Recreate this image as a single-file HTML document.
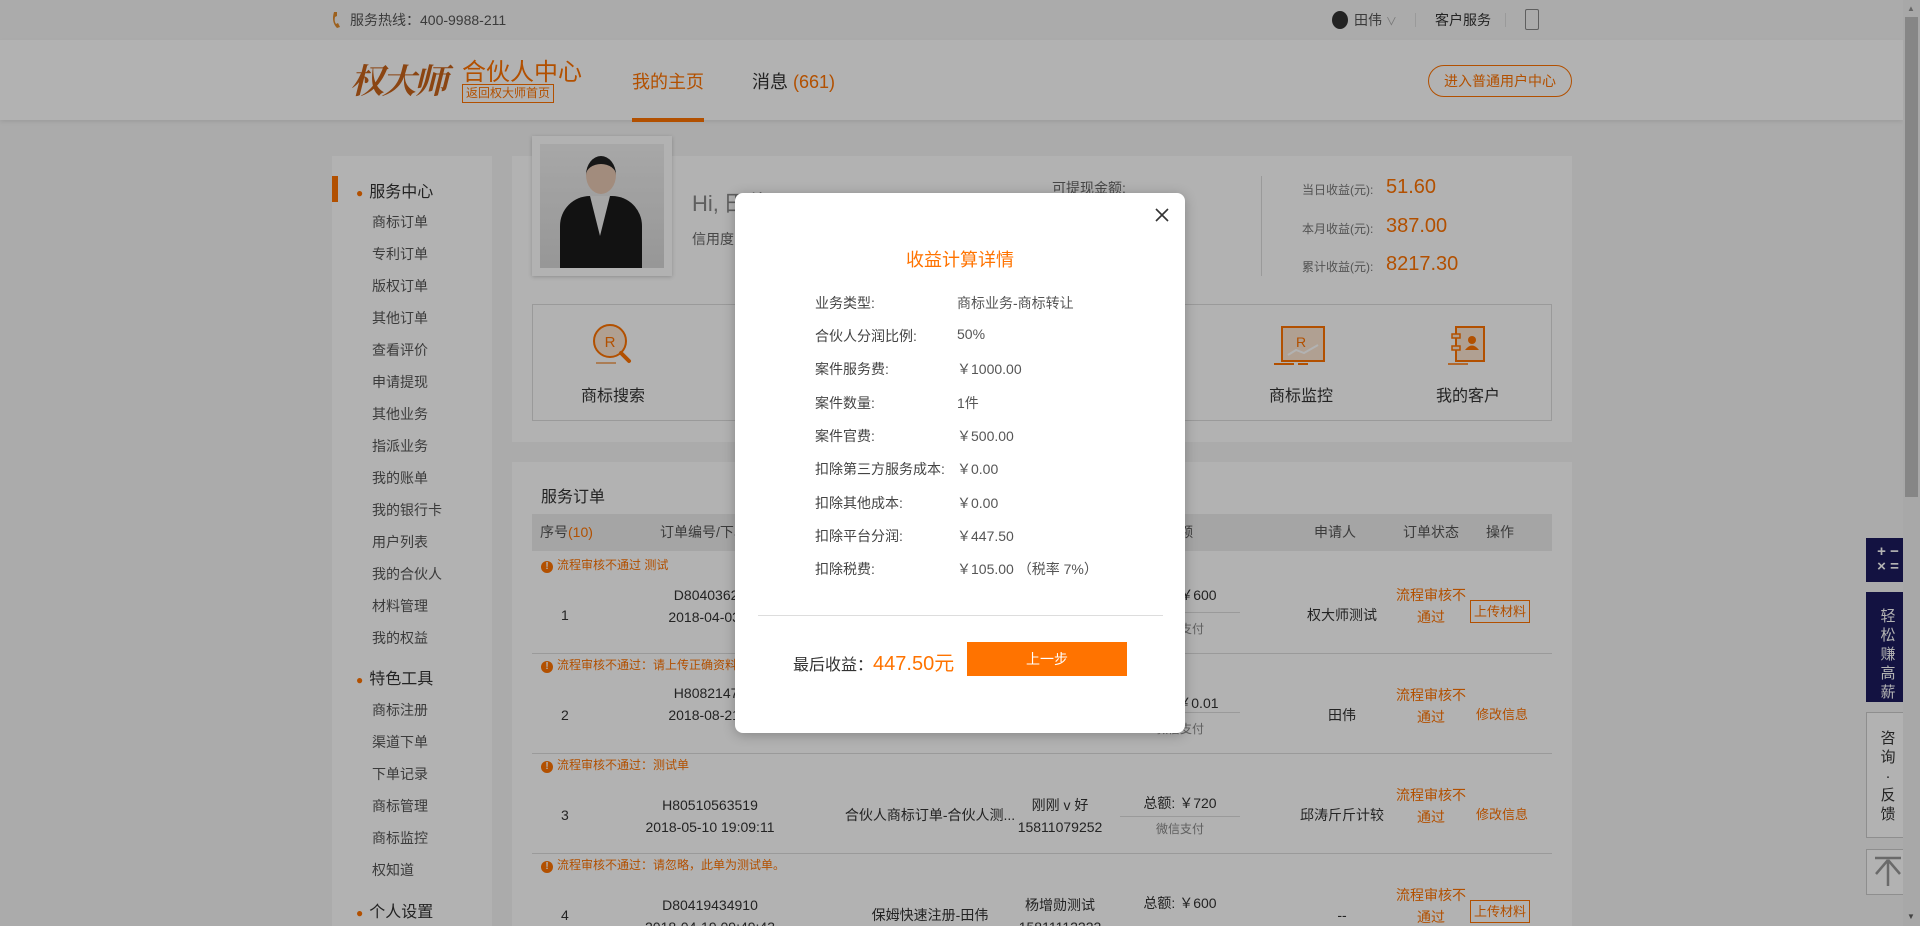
<!DOCTYPE html>
<html><head><meta charset="utf-8"><style>
*{margin:0;padding:0;box-sizing:border-box}
html,body{width:1920px;height:926px;overflow:hidden}
body{position:relative;background:#f5f5f5;font-family:"Liberation Sans","Noto Sans CJK SC",sans-serif;color:#333;font-size:14px}
.a{position:absolute;white-space:nowrap}
.or{color:#ff7300}
.top{left:0;top:0;width:1903px;height:40px;background:#f5f5f5}
.hdr{left:0;top:40px;width:1903px;height:80px;background:#fff;box-shadow:0 2px 4px rgba(0,0,0,.08)}
.card{background:#fff}
.si{position:absolute;left:372px;font-size:14px;color:#555}
.th{position:absolute;top:514px;height:37px;line-height:37px;font-size:14px;color:#555}
.notice{position:absolute;left:541px;font-size:12px;color:#ff7300}
.notice i{display:inline-block;width:12px;height:12px;border-radius:50%;background:#ff7300;color:#fff;font-style:normal;font-size:10px;text-align:center;line-height:12px;margin-right:4px;font-weight:bold}
.c{position:absolute;text-align:center;font-size:14px;line-height:22px;color:#333;white-space:nowrap}
.c.or{color:#ff7300}
.ov{position:absolute;left:0;top:0;width:1920px;height:926px;background:rgba(0,0,0,.3)}
.ml{position:absolute;left:80px;font-size:14px;color:#444}
.mv{position:absolute;left:222px;font-size:14px;color:#555}
</style></head><body>
<div class="a top"></div>
<svg class="a" style="left:330px;top:11px" width="12" height="18" viewBox="0 0 12 18"><path d="M4 1 L7 1 L7 5 L5 6 Q4 10 6 13 L8 12 L10 16 L7 17 Q1 11 4 1Z" fill="#e08a2a"/></svg>
<div class="a" style="left:350px;top:10px;font-size:14px;color:#555">服务热线：400-9988-211</div>
<div class="a" style="left:1332px;top:11px;width:16px;height:18px;border-radius:50%;background:#333"></div>
<div class="a" style="left:1354px;top:10px;font-size:14px;color:#555">田伟 <span style="color:#aaa;font-size:11px">∨</span></div>
<div class="a" style="left:1415px;top:13px;width:1px;height:14px;background:#ddd"></div>
<div class="a" style="left:1435px;top:10px;font-size:14px;color:#333">客户服务</div>
<div class="a" style="left:1505px;top:13px;width:1px;height:14px;background:#ddd"></div>
<div class="a" style="left:1525px;top:9px;width:14px;height:21px;border:1.5px solid #888;border-radius:2px"></div>
<div class="a hdr"></div>
<div class="a" style="left:350px;top:54px;font-family:'Noto Serif CJK SC',serif;font-size:34px;color:#c8631a;font-style:italic;font-weight:bold;letter-spacing:-2px">权大师</div>
<div class="a" style="left:462px;top:52px;font-size:24px;color:#ff7300">合伙人中心</div>
<div class="a" style="left:462px;top:84px;border:1px solid #ff7300;color:#ff7300;font-size:12px;padding:0 3px;line-height:17px">返回权大师首页</div>
<div class="a" style="left:632px;top:68px;font-size:18px;color:#ff7300">我的主页</div>
<div class="a" style="left:632px;top:118px;width:72px;height:4px;background:#ff7300"></div>
<div class="a" style="left:752px;top:68px;font-size:18px;color:#333">消息 <span class="or">(661)</span></div>
<div class="a" style="left:1428px;top:65px;width:144px;height:32px;border:1px solid #ff7300;border-radius:16px;color:#ff7300;text-align:center;line-height:30px;font-size:14px">进入普通用户中心</div>

<div class="a card" style="left:332px;top:156px;width:160px;height:770px"></div>
<div class="a" style="left:332px;top:176px;width:6px;height:26px;background:#ff7300"></div>
<div class="a" style="left:356px;top:178px;font-size:16px;color:#333"><span class="or" style="font-size:12px;margin-right:6px">●</span>服务中心</div>
<div class="si" style="top:212px">商标订单</div><div class="si" style="top:244px">专利订单</div><div class="si" style="top:276px">版权订单</div><div class="si" style="top:308px">其他订单</div><div class="si" style="top:340px">查看评价</div><div class="si" style="top:372px">申请提现</div><div class="si" style="top:404px">其他业务</div><div class="si" style="top:436px">指派业务</div><div class="si" style="top:468px">我的账单</div><div class="si" style="top:500px">我的银行卡</div><div class="si" style="top:532px">用户列表</div><div class="si" style="top:564px">我的合伙人</div><div class="si" style="top:596px">材料管理</div><div class="si" style="top:628px">我的权益</div>
<div class="a" style="left:356px;top:665px;font-size:16px;color:#333"><span class="or" style="font-size:12px;margin-right:6px">●</span>特色工具</div>
<div class="si" style="top:700px">商标注册</div><div class="si" style="top:732px">渠道下单</div><div class="si" style="top:764px">下单记录</div><div class="si" style="top:796px">商标管理</div><div class="si" style="top:828px">商标监控</div><div class="si" style="top:860px">权知道</div>
<div class="a" style="left:356px;top:898px;font-size:16px;color:#333"><span class="or" style="font-size:12px;margin-right:6px">●</span>个人设置</div>

<div class="a card" style="left:512px;top:156px;width:1060px;height:286px"></div>
<div class="a" style="left:532px;top:136px;width:140px;height:140px;background:#fff;box-shadow:0 1px 4px rgba(0,0,0,.2)"></div>
<div class="a" style="left:540px;top:144px;width:124px;height:124px;background:linear-gradient(#f0f0f0,#d8d8d8)"></div>
<div class="a" style="left:560px;top:196px;width:82px;height:72px;background:#1a1a1a;border-radius:30px 30px 0 0"></div>
<div class="a" style="left:590px;top:196px;width:20px;height:40px;background:#eee;clip-path:polygon(0 0,100% 0,50% 100%)"></div>
<div class="a" style="left:586px;top:156px;width:30px;height:38px;background:#e9c9b4;border-radius:50%;border-top:8px solid #222"></div>
<div class="a" style="left:692px;top:186px;font-size:22px;color:#888">Hi, 田伟</div>
<div class="a" style="left:692px;top:229px;font-size:14px;color:#666">信用度</div>
<div class="a" style="left:1052px;top:178px;font-size:14px;color:#666">可提现金额:</div>
<div class="a" style="left:1261px;top:176px;width:1px;height:100px;background:#ddd"></div>
<div class="a" style="left:1302px;top:181px;font-size:12px;color:#777">当日收益(元):</div><div class="a or" style="left:1386px;top:176px;font-size:20px">51.60</div>
<div class="a" style="left:1302px;top:220px;font-size:12px;color:#777">本月收益(元):</div><div class="a or" style="left:1386px;top:215px;font-size:20px">387.00</div>
<div class="a" style="left:1302px;top:258px;font-size:12px;color:#777">累计收益(元):</div><div class="a or" style="left:1386px;top:253px;font-size:20px">8217.30</div>
<div class="a" style="left:532px;top:304px;width:1020px;height:117px;border:1px solid #ddd"></div>
<svg class="a" style="left:590px;top:324px" width="48" height="44" viewBox="0 0 48 44"><circle cx="20" cy="17" r="16" fill="#fde6d2" stroke="#ff7300" stroke-width="2"/><text x="20" y="23" font-size="15" text-anchor="middle" fill="#ff7300" font-family="Liberation Sans">R</text><path d="M31 29 L39 37" stroke="#ff7300" stroke-width="4" stroke-linecap="round"/><path d="M6 39 L26 39" stroke="#f5b37a" stroke-width="2"/></svg>
<div class="a" style="left:581px;top:382px;font-size:16px;color:#333">商标搜索</div>
<svg class="a" style="left:1274px;top:325px" width="52" height="44" viewBox="0 0 52 44"><rect x="8" y="2" width="42" height="34" fill="#fde6d2" stroke="#ff7300" stroke-width="2"/><text x="27" y="22" font-size="14" text-anchor="middle" fill="#ff7300" font-family="Liberation Sans">R</text><path d="M14 30 L22 25 L30 28 L44 20" stroke="#fff" stroke-width="2" fill="none"/><path d="M0 39 H20 M24 39 H34" stroke="#ff7300" stroke-width="2"/></svg>
<div class="a" style="left:1269px;top:382px;font-size:16px;color:#333">商标监控</div>
<svg class="a" style="left:1448px;top:325px" width="40" height="44" viewBox="0 0 40 44"><rect x="8" y="2" width="28" height="34" fill="#fde6d2" stroke="#ff7300" stroke-width="2"/><rect x="4" y="9" width="8" height="4" fill="#fde6d2" stroke="#ff7300" stroke-width="1.5"/><rect x="4" y="21" width="8" height="4" fill="#fde6d2" stroke="#ff7300" stroke-width="1.5"/><circle cx="24" cy="15" r="4" fill="#ff7300"/><path d="M17 25 Q24 16 31 25Z" fill="#ff7300"/><path d="M0 39 H20" stroke="#ff7300" stroke-width="1.5"/></svg>
<div class="a" style="left:1436px;top:382px;font-size:16px;color:#333">我的客户</div>

<div class="a card" style="left:512px;top:462px;width:1060px;height:464px"></div>
<div class="a" style="left:541px;top:483px;font-size:16px;color:#333">服务订单</div>
<div class="a" style="left:532px;top:514px;width:1020px;height:37px;background:#ececec"></div>
<div class="th" style="left:540px">序号<span class="or">(10)</span></div>
<div class="th" style="left:660px">订单编号/下单时间</div>
<div class="th" style="left:900px">产品名称</div>
<div class="th" style="left:1040px">申请信息</div>
<div class="th" style="left:1165px">总额</div>
<div class="th" style="left:1314px">申请人</div>
<div class="th" style="left:1403px">订单状态</div>
<div class="th" style="left:1486px">操作</div>

<div class="notice" style="top:556px"><i>!</i>流程审核不通过 测试</div>
<div class="c" style="left:561px;top:604px">1</div>
<div class="c" style="left:620px;top:584px;width:180px">D80403625<br>2018-04-03 0</div>
<div class="c" style="left:1120px;top:584px;width:120px">总额: ￥600</div>
<div class="a" style="left:1120px;top:612px;width:120px;height:1px;background:#ddd"></div>
<div class="c" style="left:1120px;top:618px;width:120px;font-size:12px;color:#888">微信支付</div>
<div class="c" style="left:1272px;top:604px;width:140px">权大师测试</div>
<div class="c or" style="left:1391px;top:584px;width:80px">流程审核不<br>通过</div>
<div class="a" style="left:1470px;top:600px;border:1px solid #ff7300;color:#ff7300;font-size:13px;padding:0 3px;line-height:21px">上传材料</div>
<div class="a" style="left:532px;top:653px;width:1020px;height:1px;background:#ddd"></div>

<div class="notice" style="top:656px"><i>!</i>流程审核不通过：请上传正确资料</div>
<div class="c" style="left:561px;top:704px">2</div>
<div class="c" style="left:620px;top:682px;width:180px">H80821474<br>2018-08-21 2</div>
<div class="c" style="left:1120px;top:692px;width:120px">总额: ￥0.01</div>
<div class="a" style="left:1120px;top:712px;width:120px;height:1px;background:#ddd"></div>
<div class="c" style="left:1120px;top:718px;width:120px;font-size:12px;color:#888">微信支付</div>
<div class="c" style="left:1272px;top:704px;width:140px">田伟</div>
<div class="c or" style="left:1391px;top:684px;width:80px">流程审核不<br>通过</div>
<div class="c or" style="left:1476px;top:704px;font-size:13px">修改信息</div>
<div class="a" style="left:532px;top:753px;width:1020px;height:1px;background:#ddd"></div>

<div class="notice" style="top:756px"><i>!</i>流程审核不通过：测试单</div>
<div class="c" style="left:561px;top:804px">3</div>
<div class="c" style="left:620px;top:794px;width:180px">H80510563519<br>2018-05-10 19:09:11</div>
<div class="c" style="left:830px;top:804px;width:200px">合伙人商标订单-合伙人测...</div>
<div class="c" style="left:1000px;top:794px;width:120px">刚刚 v 好<br>15811079252</div>
<div class="c" style="left:1120px;top:792px;width:120px">总额: ￥720</div>
<div class="a" style="left:1120px;top:816px;width:120px;height:1px;background:#ddd"></div>
<div class="c" style="left:1120px;top:818px;width:120px;font-size:12px;color:#888">微信支付</div>
<div class="c" style="left:1272px;top:804px;width:140px">邱涛斤斤计较</div>
<div class="c or" style="left:1391px;top:784px;width:80px">流程审核不<br>通过</div>
<div class="c or" style="left:1476px;top:804px;font-size:13px">修改信息</div>
<div class="a" style="left:532px;top:853px;width:1020px;height:1px;background:#ddd"></div>

<div class="notice" style="top:856px"><i>!</i>流程审核不通过：请忽略，此单为测试单。</div>
<div class="c" style="left:561px;top:904px">4</div>
<div class="c" style="left:620px;top:894px;width:180px">D80419434910<br>2018-04-19 09:49:43</div>
<div class="c" style="left:830px;top:904px;width:200px">保姆快速注册-田伟</div>
<div class="c" style="left:1000px;top:894px;width:120px">杨增勋测试<br>15811112222</div>
<div class="c" style="left:1120px;top:892px;width:120px">总额: ￥600</div>
<div class="c" style="left:1272px;top:904px;width:140px">--</div>
<div class="c or" style="left:1391px;top:884px;width:80px">流程审核不<br>通过</div>
<div class="a" style="left:1470px;top:900px;border:1px solid #ff7300;color:#ff7300;font-size:13px;padding:0 3px;line-height:21px">上传材料</div>

<div class="a" style="left:1866px;top:538px;width:44px;height:44px;background:#1c1a5e;color:#fff;font-size:15px;line-height:15px;text-align:center;padding-top:6px;font-weight:bold">+ −<br>× =</div>
<div class="a" style="left:1866px;top:592px;width:44px;height:110px;background:#1c1a5e;color:#fff;font-size:15px;line-height:19px;text-align:center;padding-top:15px">轻<br>松<br>赚<br>高<br>薪</div>
<div class="a" style="left:1866px;top:712px;width:44px;height:126px;background:#fff;border:1px solid #ccc;color:#333;font-size:15px;line-height:19px;text-align:center;padding-top:16px">咨<br>询<br>·<br>反<br>馈</div>
<div class="a" style="left:1866px;top:849px;width:44px;height:46px;background:#fff;border:1px solid #ccc"></div>
<svg class="a" style="left:1873px;top:856px" width="30" height="32" viewBox="0 0 30 32"><path d="M2 2 H28 M15 4 V30 M15 4 L3 18 M15 4 L27 18" stroke="#999" stroke-width="2.5" fill="none"/></svg>

<div class="a" style="left:1903px;top:0;width:17px;height:926px;background:#f1f1f1"></div>
<div class="a" style="left:1905px;top:17px;width:13px;height:480px;background:#c1c1c1"></div>

<div class="ov"></div>
<div class="a" style="left:1907px;top:4px;font-size:8px;color:#666">▲</div>
<div class="a" style="left:1907px;top:912px;font-size:8px;color:#444">▼</div>

<div class="a" style="left:735px;top:193px;width:450px;height:540px;background:#fff;border-radius:8px;box-shadow:0 2px 12px rgba(0,0,0,.25)">
<svg class="a" style="left:420px;top:15px" width="14" height="14" viewBox="0 0 14 14"><path d="M1 1 L13 13 M13 1 L1 13" stroke="#333" stroke-width="1.6"/></svg>
<div class="a or" style="left:0;width:450px;text-align:center;top:53px;font-size:18px">收益计算详情</div>
<div class="ml" style="top:100px">业务类型:</div><div class="mv" style="top:100px">商标业务-商标转让</div>
<div class="ml" style="top:133px">合伙人分润比例:</div><div class="mv" style="top:133px">50%</div>
<div class="ml" style="top:166px">案件服务费:</div><div class="mv" style="top:166px">￥1000.00</div>
<div class="ml" style="top:200px">案件数量:</div><div class="mv" style="top:200px">1件</div>
<div class="ml" style="top:233px">案件官费:</div><div class="mv" style="top:233px">￥500.00</div>
<div class="ml" style="top:266px">扣除第三方服务成本:</div><div class="mv" style="top:266px">￥0.00</div>
<div class="ml" style="top:300px">扣除其他成本:</div><div class="mv" style="top:300px">￥0.00</div>
<div class="ml" style="top:333px">扣除平台分润:</div><div class="mv" style="top:333px">￥447.50</div>
<div class="ml" style="top:366px">扣除税费:</div><div class="mv" style="top:366px">￥105.00 （税率 7%）</div>
<div class="a" style="left:23px;top:422px;width:405px;height:1px;background:#ddd"></div>
<div class="a" style="left:58px;top:454px;font-size:16px;color:#333">最后收益：<span class="or" style="font-size:20px">447.50元</span></div>
<div class="a" style="left:232px;top:449px;width:160px;height:34px;background:#ff7300;color:#fff;text-align:center;line-height:34px;font-size:14px">上一步</div>
</div>
</body></html>
